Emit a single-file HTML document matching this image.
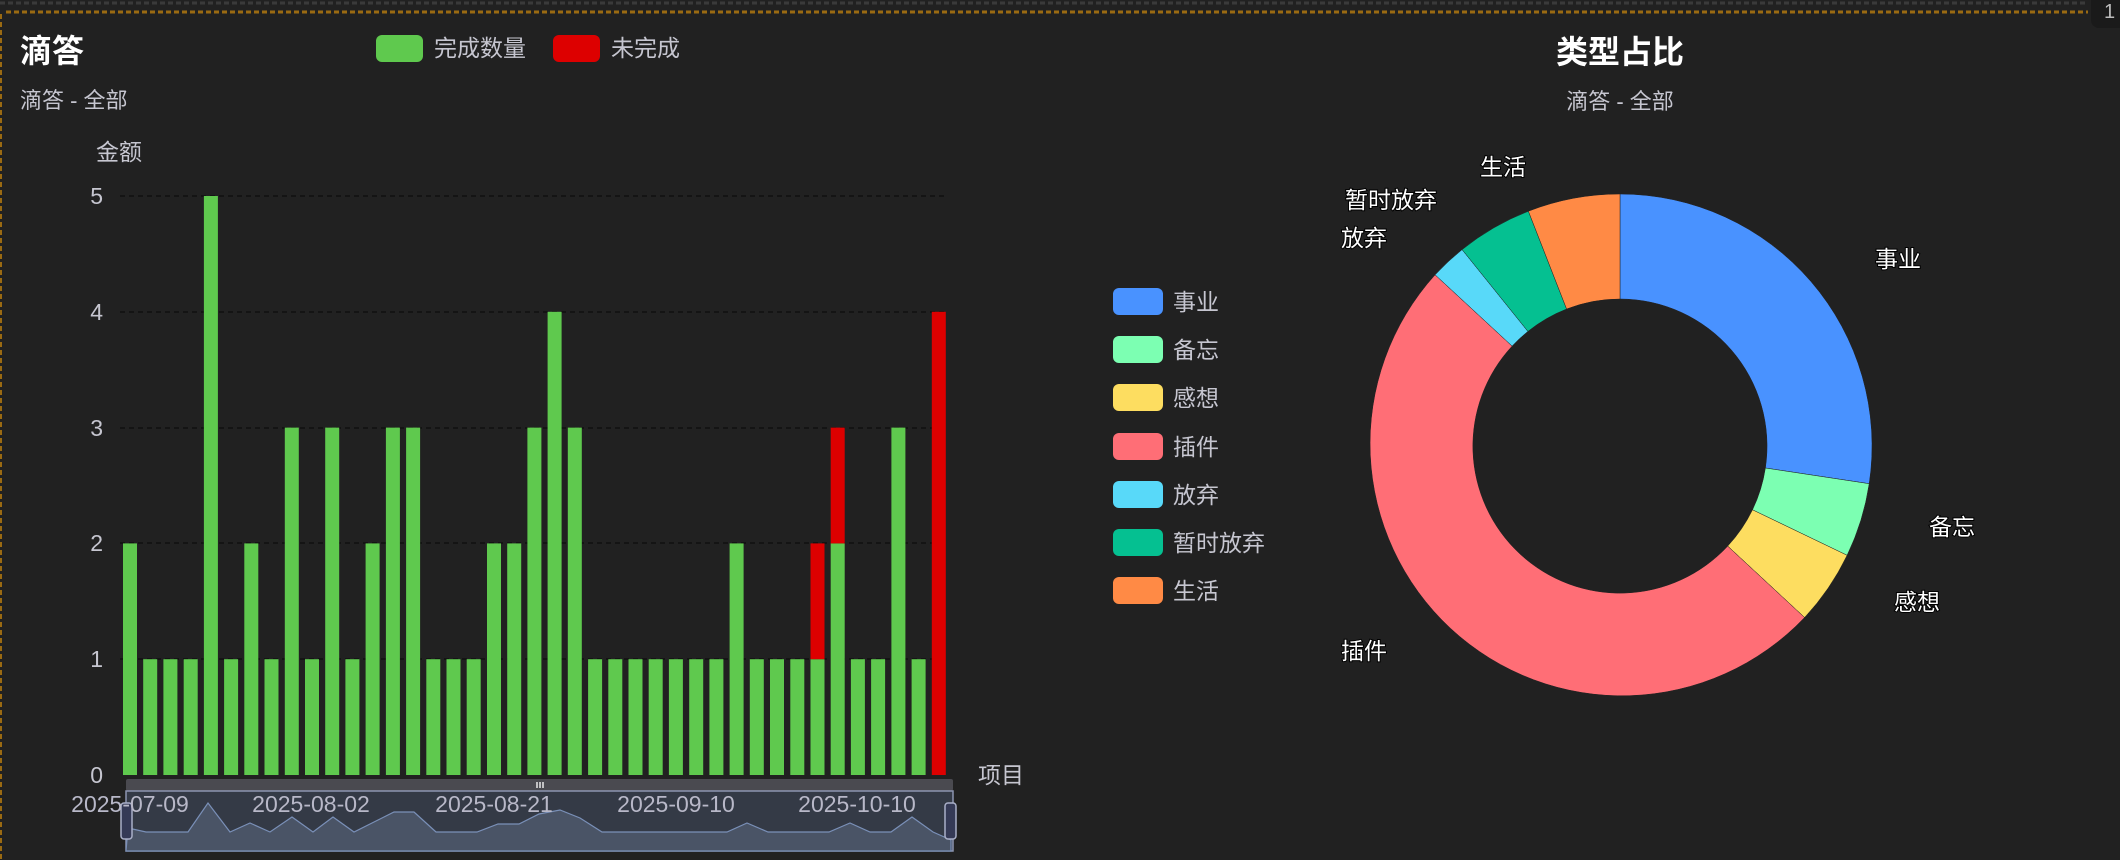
<!DOCTYPE html>
<html><head><meta charset="utf-8"><style>
html,body{margin:0;padding:0;background:#212121;width:2120px;height:860px;overflow:hidden}
svg{display:block}
text{font-family:"Liberation Sans","Noto Sans CJK SC",sans-serif}
</style></head><body>
<svg width="2120" height="860" viewBox="0 0 2120 860" xmlns="http://www.w3.org/2000/svg">
<rect width="2120" height="860" fill="#212121"/>
<line x1="0" y1="3" x2="2088" y2="3" stroke="#3a3a3a" stroke-width="3" stroke-dasharray="5 3"/>
<line x1="6" y1="12" x2="2088" y2="12" stroke="#9a6a12" stroke-width="3" stroke-dasharray="5 3"/>
<line x1="1" y1="14" x2="1" y2="860" stroke="#9a6a12" stroke-width="2" stroke-dasharray="5 3"/>
<rect x="2091" y="-8" width="40" height="36" rx="8" fill="#1a1a1a"/>
<text x="2104" y="18" font-size="20" fill="#bbb">1</text>

<text x="20" y="62" font-size="32" font-weight="bold" fill="#fff">滴答</text>
<text x="20" y="108" font-size="22" fill="#c6c6d0">滴答 - 全部</text>
<rect x="376" y="35" width="47" height="27" rx="6" fill="#5fc94e"/>
<text x="434" y="56" font-size="23" fill="#c6c6d0">完成数量</text>
<rect x="553" y="35" width="47" height="27" rx="6" fill="#dd0000"/>
<text x="611" y="56" font-size="23" fill="#c6c6d0">未完成</text>
<text x="96" y="160" font-size="23" fill="#c6c6d0">金额</text>
<g font-size="23" fill="#c6c6d0" text-anchor="end">
<text x="103" y="204">5</text><text x="103" y="320">4</text><text x="103" y="436">3</text><text x="103" y="551">2</text><text x="103" y="667">1</text><text x="103" y="783">0</text>
</g>
<g stroke="#111" stroke-width="1.5" stroke-dasharray="5 4">
<line x1="120" y1="196" x2="944" y2="196"/><line x1="120" y1="312" x2="944" y2="312"/><line x1="120" y1="428" x2="944" y2="428"/><line x1="120" y1="543" x2="944" y2="543"/><line x1="120" y1="659" x2="944" y2="659"/>
</g>
<g fill="#5fc94e">
<rect x="123" y="543.4" width="14" height="231.6"/>
<rect x="143.2" y="659.2" width="14" height="115.8"/>
<rect x="163.4" y="659.2" width="14" height="115.8"/>
<rect x="183.7" y="659.2" width="14" height="115.8"/>
<rect x="203.9" y="196" width="14" height="579"/>
<rect x="224.1" y="659.2" width="14" height="115.8"/>
<rect x="244.3" y="543.4" width="14" height="231.6"/>
<rect x="264.5" y="659.2" width="14" height="115.8"/>
<rect x="284.8" y="427.6" width="14" height="347.4"/>
<rect x="305" y="659.2" width="14" height="115.8"/>
<rect x="325.2" y="427.6" width="14" height="347.4"/>
<rect x="345.4" y="659.2" width="14" height="115.8"/>
<rect x="365.6" y="543.4" width="14" height="231.6"/>
<rect x="385.9" y="427.6" width="14" height="347.4"/>
<rect x="406.1" y="427.6" width="14" height="347.4"/>
<rect x="426.3" y="659.2" width="14" height="115.8"/>
<rect x="446.5" y="659.2" width="14" height="115.8"/>
<rect x="466.7" y="659.2" width="14" height="115.8"/>
<rect x="487" y="543.4" width="14" height="231.6"/>
<rect x="507.2" y="543.4" width="14" height="231.6"/>
<rect x="527.4" y="427.6" width="14" height="347.4"/>
<rect x="547.6" y="311.8" width="14" height="463.2"/>
<rect x="567.8" y="427.6" width="14" height="347.4"/>
<rect x="588.1" y="659.2" width="14" height="115.8"/>
<rect x="608.3" y="659.2" width="14" height="115.8"/>
<rect x="628.5" y="659.2" width="14" height="115.8"/>
<rect x="648.7" y="659.2" width="14" height="115.8"/>
<rect x="668.9" y="659.2" width="14" height="115.8"/>
<rect x="689.2" y="659.2" width="14" height="115.8"/>
<rect x="709.4" y="659.2" width="14" height="115.8"/>
<rect x="729.6" y="543.4" width="14" height="231.6"/>
<rect x="749.8" y="659.2" width="14" height="115.8"/>
<rect x="770" y="659.2" width="14" height="115.8"/>
<rect x="790.3" y="659.2" width="14" height="115.8"/>
<rect x="810.5" y="659.2" width="14" height="115.8"/>
<rect x="830.7" y="543.4" width="14" height="231.6"/>
<rect x="850.9" y="659.2" width="14" height="115.8"/>
<rect x="871.1" y="659.2" width="14" height="115.8"/>
<rect x="891.4" y="427.6" width="14" height="347.4"/>
<rect x="911.6" y="659.2" width="14" height="115.8"/>
</g>
<g fill="#dd0000">
<rect x="810.5" y="543.4" width="14" height="115.8"/>
<rect x="830.7" y="427.6" width="14" height="115.8"/>
<rect x="931.8" y="311.8" width="14" height="463.2"/>
</g>
<text x="978" y="783" font-size="23" fill="#c6c6d0">项目</text>

<rect x="126" y="779" width="827" height="12" rx="2" fill="#4a4a50"/>
<g stroke="#fff" stroke-width="1.3"><line x1="537" y1="782" x2="537" y2="788"/><line x1="540" y1="782" x2="540" y2="788"/><line x1="543" y1="782" x2="543" y2="788"/></g>
<rect x="126" y="791" width="827" height="60" fill="#343a46" stroke="#8c94b0" stroke-width="1.5"/>
<path d="M128 828 L146 832 L188 832 L208 803 L230 832 L250 823 L270 832 L292 817 L313 832 L333 817 L354 832 L374 822 L394 812 L414 812 L436 832 L477 832 L498 824 L519 824 L539 814 L560 810 L580 818 L602 832 L727 832 L747 823 L768 832 L829 832 L850 823 L870 832 L891 832 L912 817 L933 832 L951 840 L951 851 L126 851 Z" fill="#4a5466" stroke="#7a90b8" stroke-width="1.2"/>
<rect x="121" y="803" width="11" height="36" rx="3" fill="#353a56" stroke="#aab0c8" stroke-width="1.5"/>
<rect x="945" y="803" width="11" height="36" rx="3" fill="#353a56" stroke="#aab0c8" stroke-width="1.5"/>
<g font-size="23" fill="#b8b8c8" text-anchor="middle">
<text x="130" y="812">2025-07-09</text><text x="311" y="812">2025-08-02</text><text x="494" y="812">2025-08-21</text><text x="676" y="812">2025-09-10</text><text x="857" y="812">2025-10-10</text>
</g>

<text x="1620" y="63" font-size="32" font-weight="bold" fill="#fff" text-anchor="middle">类型占比</text>
<text x="1620" y="109" font-size="22" fill="#c6c6d0" text-anchor="middle">滴答 - 全部</text>
<g font-size="23" fill="#c6c6d0">
<rect x="1113" y="288" width="50" height="27" rx="6" fill="#4992ff"/><text x="1173" y="310">事业</text>
<rect x="1113" y="336" width="50" height="27" rx="6" fill="#7cffb2"/><text x="1173" y="358">备忘</text>
<rect x="1113" y="384" width="50" height="27" rx="6" fill="#fddd60"/><text x="1173" y="406">感想</text>
<rect x="1113" y="433" width="50" height="27" rx="6" fill="#ff6e76"/><text x="1173" y="455">插件</text>
<rect x="1113" y="481" width="50" height="27" rx="6" fill="#58d9f9"/><text x="1173" y="503">放弃</text>
<rect x="1113" y="529" width="50" height="27" rx="6" fill="#05c091"/><text x="1173" y="551">暂时放弃</text>
<rect x="1113" y="577" width="50" height="27" rx="6" fill="#ff8a45"/><text x="1173" y="599">生活</text>
</g>
<g stroke="#212121" stroke-width="0.5">
<path d="M1620 194 A252 252 0 0 1 1869.2 483.7 L1765.4 468 A147 147 0 0 0 1620 299 Z" fill="#4992ff"/>
<path d="M1869.2 483.7 A252 252 0 0 1 1847.1 555.3 L1752.5 509.8 A147 147 0 0 0 1765.4 468 Z" fill="#7cffb2"/>
<path d="M1847.1 555.3 A252 252 0 0 1 1804.6 617.5 L1727.7 546.1 A147 147 0 0 0 1752.5 509.8 Z" fill="#fddd60"/>
<path d="M1804.6 617.5 A252 252 0 0 1 1435.1 274.8 L1512.1 346.1 A147 147 0 0 0 1727.7 546.1 Z" fill="#ff6e76"/>
<path d="M1435.1 274.8 A252 252 0 0 1 1462.1 249.6 L1527.9 331.4 A147 147 0 0 0 1512.1 346.1 Z" fill="#58d9f9"/>
<path d="M1462.1 249.6 A252 252 0 0 1 1528.4 211.2 L1566.6 309 A147 147 0 0 0 1527.9 331.4 Z" fill="#05c091"/>
<path d="M1528.4 211.2 A252 252 0 0 1 1620 194 L1620 299 A147 147 0 0 0 1566.6 309 Z" fill="#ff8a45"/>
</g>
<g font-size="23" fill="#fff" stroke="#000" stroke-width="2" paint-order="stroke" text-anchor="middle">
<text x="1503" y="175">生活</text>
<text x="1391" y="208">暂时放弃</text>
<text x="1364" y="246">放弃</text>
<text x="1898" y="267">事业</text>
<text x="1952" y="535">备忘</text>
<text x="1917" y="610">感想</text>
<text x="1364" y="659">插件</text>
</g>
</svg>
</body></html>
